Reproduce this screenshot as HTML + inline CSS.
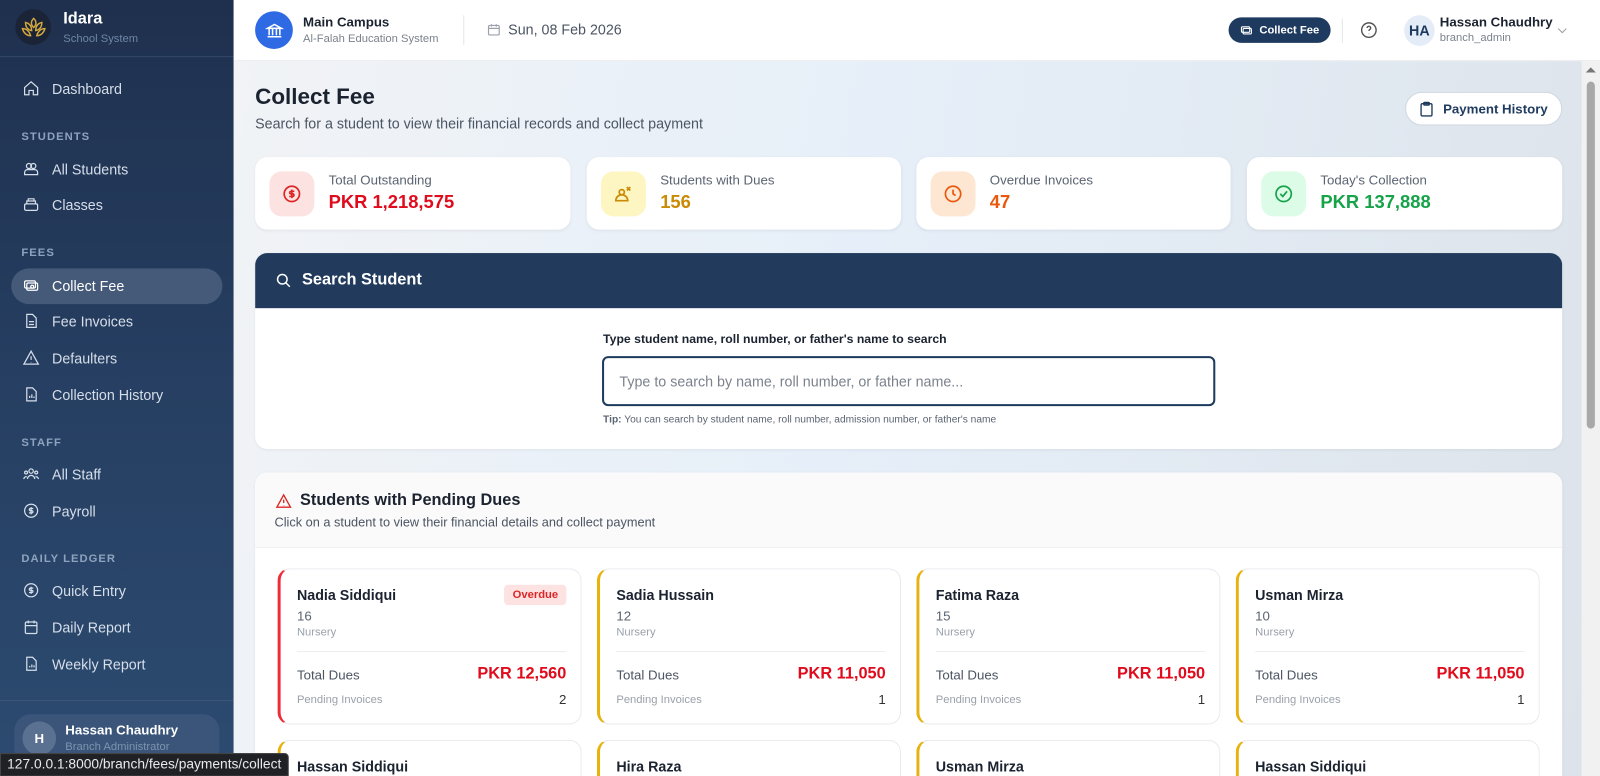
<!DOCTYPE html>
<html style="width:1600px;height:776px;overflow:hidden"><head><meta charset="utf-8"><style>
*{box-sizing:border-box;margin:0;padding:0}
body{width:1600px;height:776px;overflow:hidden;font-family:"Liberation Sans",sans-serif;position:relative;background:#eef2f6}
#w{position:absolute;left:0;top:0;width:1568px;height:761px;transform:scale(1.020408);transform-origin:0 0;overflow:hidden}
.a{position:absolute}
#sb{left:0;top:0;width:229px;height:761px;background:linear-gradient(180deg,#1f304e 0%,#263f62 50%,#2c4b70 100%)}
.nav{position:absolute;left:22px;color:#d6dee9;font-size:14px;display:flex;align-items:center;gap:12px}
.nav svg{width:17px;height:17px;stroke:#d6dee9;fill:none;stroke-width:1.7}
.sec{position:absolute;left:21px;font-size:11px;font-weight:bold;letter-spacing:1px;color:#8ea3bf}
#main{left:229px;top:60px;width:1321px;height:716px;background:linear-gradient(100deg,#f1f3f6 0%,#e6eff9 45%,#dde3ea 100%)}
.card{position:absolute;background:#fff;border-radius:12px;box-shadow:0 1px 3px rgba(0,0,0,.06)}
.stat .ic{position:absolute;left:14px;top:14px;width:44px;height:44px;border-radius:12px;display:flex;align-items:center;justify-content:center}
.stat .l{position:absolute;left:72px;top:15px;font-size:13px;color:#5b6472}
.stat .v{position:absolute;left:72px;top:34px;font-size:18px;font-weight:bold}
.sc{position:absolute;width:298px;height:153px;background:#fff;border:1px solid #e8eaee;border-radius:12px;border-left:3px solid #e9b10c}
.sc .n{position:absolute;left:16px;top:17px;font-size:14px;font-weight:bold;color:#1b2330}
.sc .r{position:absolute;left:16px;top:38px;font-size:13px;color:#5b6472}
.sc .c{position:absolute;left:16px;top:56px;font-size:11px;color:#9aa1ab}
.sc .hr{position:absolute;left:16px;right:14px;top:80px;border-top:1px solid #eceef1}
.sc .td{position:absolute;left:16px;top:96px;font-size:13px;color:#4b5563}
.sc .amt{position:absolute;right:14px;top:94px;font-size:16px;font-weight:bold;color:#e00b1c}
.sc .pi{position:absolute;left:16px;top:122px;font-size:11px;color:#9aa1ab}
.sc .pn{position:absolute;right:14px;top:120px;font-size:13px;color:#333}
.sc.b{height:51px;border-bottom:0;border-radius:12px 12px 0 0}
</style></head><body><div id="w">
<div id="sb" class="a">
 <div class="a" style="left:15px;top:9px;width:35px;height:35px;border-radius:50%;background:#1a2436;display:flex;align-items:center;justify-content:center">
  <svg width="26" height="22" viewBox="0 0 26 22" fill="none" stroke="#d6a940" stroke-width="1.4"><path d="M13 2c3 3 3 6 0 9c-3-3-3-6 0-9zM5 6c4 1 6 4 6 8c-4-1-6-4-6-8zM21 6c-4 1-6 4-6 8c4-1 6-4 6-8zM2 12c4 0 7 3 8 7c-4 0-7-3-8-7zM24 12c-4 0-7 3-8 7c4 0 7-3 8-7z"/></svg>
 </div>
 <div class="a" style="left:62px;top:10px;color:#fff;font-weight:bold;font-size:16px">Idara</div>
 <div class="a" style="left:62px;top:32px;color:#6f86a5;font-size:11px">School System</div>
 <div class="a" style="left:0;top:55px;width:229px;border-top:1px solid #34496a"></div>
 <div class="nav" style="top:78px"><svg viewBox="0 0 24 24"><path d="M3 11l9-8 9 8v10h-6v-6h-6v6H3z"/></svg>Dashboard</div>
 <div class="sec" style="top:128px">STUDENTS</div>
 <div class="nav" style="top:157px"><svg viewBox="0 0 24 24"><circle cx="9" cy="8" r="3.5"/><circle cx="15" cy="8" r="3.5"/><path d="M3 20v-3a4 4 0 014-4h10a4 4 0 014 4v3z"/></svg>All Students</div>
 <div class="nav" style="top:192px"><svg viewBox="0 0 24 24"><rect x="3" y="11" width="18" height="9" rx="2"/><path d="M6 11V7h12v4M8 7V4h8v3"/></svg>Classes</div>
 <div class="sec" style="top:242px">FEES</div>
 <div class="a" style="left:11px;top:263px;width:207px;height:35px;border-radius:18px;background:#455a78"></div>
 <div class="nav" style="top:271px;color:#fff"><svg viewBox="0 0 24 24" style="stroke:#fff"><rect x="3" y="6" width="15" height="10" rx="2"/><rect x="6" y="9" width="15" height="10" rx="2"/><circle cx="13.5" cy="14" r="2"/></svg>Collect Fee</div>
 <div class="nav" style="top:306px"><svg viewBox="0 0 24 24"><path d="M6 3h8l5 5v13H6z M9 13h7M9 17h7"/></svg>Fee Invoices</div>
 <div class="nav" style="top:342px"><svg viewBox="0 0 24 24"><path d="M12 3l10 18H2z M12 10v5M12 18v.5"/></svg>Defaulters</div>
 <div class="nav" style="top:378px"><svg viewBox="0 0 24 24"><path d="M6 3h8l5 5v13H6z M10 17v-3M13 17v-5M16 17v-2"/></svg>Collection History</div>
 <div class="sec" style="top:428px">STAFF</div>
 <div class="nav" style="top:456px"><svg viewBox="0 0 24 24"><circle cx="12" cy="8" r="3"/><circle cx="5" cy="10" r="2"/><circle cx="19" cy="10" r="2"/><path d="M7 19a5 5 0 0110 0M2 19a3 3 0 014-3M22 19a3 3 0 00-4-3"/></svg>All Staff</div>
 <div class="nav" style="top:492px"><svg viewBox="0 0 24 24"><circle cx="12" cy="12" r="9"/><path d="M15 9h-4a1.5 1.5 0 000 3h2a1.5 1.5 0 010 3H9M12 7v10"/></svg>Payroll</div>
 <div class="sec" style="top:542px">DAILY LEDGER</div>
 <div class="nav" style="top:570px"><svg viewBox="0 0 24 24"><circle cx="12" cy="12" r="9"/><path d="M15 9h-4a1.5 1.5 0 000 3h2a1.5 1.5 0 010 3H9M12 7v10"/></svg>Quick Entry</div>
 <div class="nav" style="top:606px"><svg viewBox="0 0 24 24"><rect x="4" y="5" width="16" height="16" rx="2"/><path d="M8 3v4M16 3v4M4 10h16"/></svg>Daily Report</div>
 <div class="nav" style="top:642px"><svg viewBox="0 0 24 24"><path d="M6 3h8l5 5v13H6z M10 17v-2M13 17v-4M16 17v-3"/></svg>Weekly Report</div>
 <div class="a" style="left:0;top:686px;width:229px;border-top:1px solid #3a5579"></div>
 <div class="a" style="left:14px;top:700px;width:201px;height:50px;border-radius:16px;background:#3a5579"></div>
 <div class="a" style="left:22px;top:707px;width:33px;height:33px;border-radius:50%;background:#5a7191;color:#fff;font-weight:bold;font-size:13px;display:flex;align-items:center;justify-content:center">H</div>
 <div class="a" style="left:64px;top:708px;color:#fff;font-weight:bold;font-size:13px">Hassan Chaudhry</div>
 <div class="a" style="left:64px;top:726px;color:#7d93b0;font-size:11px">Branch Administrator</div>
</div>
<div class="a" style="left:229px;top:0;width:1371px;height:60px;background:#fff;border-bottom:1px solid #e7eaee"></div>
<div class="a" style="left:250px;top:11px;width:37px;height:37px;border-radius:50%;background:#2d6ae3;display:flex;align-items:center;justify-content:center"><svg width="18" height="18" viewBox="0 0 24 24" fill="none" stroke="#fff" stroke-width="2"><path d="M3 9l9-5 9 5H3zM5 10v8M9.5 10v8M14.5 10v8M19 10v8M3 20h18"/></svg></div>
<div class="a" style="left:297px;top:14px;font-size:13px;font-weight:bold;color:#1b2330">Main Campus</div>
<div class="a" style="left:297px;top:32px;font-size:11px;color:#7b828c">Al-Falah Education System</div>
<div class="a" style="left:454px;top:15px;height:29px;border-left:1px solid #e3e6ea"></div>
<svg class="a" style="left:477px;top:22px" width="14" height="14" viewBox="0 0 24 24" fill="none" stroke="#9aa1ab" stroke-width="2"><rect x="3" y="5" width="18" height="16" rx="2"/><path d="M8 3v4M16 3v4M3 10h18"/></svg>
<div class="a" style="left:498px;top:21px;font-size:14px;color:#4b5563">Sun, 08 Feb 2026</div>
<div class="a" style="left:1204px;top:17px;width:100px;height:25px;border-radius:13px;background:#1e3a5f;color:#fff;font-size:11px;font-weight:bold;display:flex;align-items:center;justify-content:center;gap:6px"><svg width="13" height="13" viewBox="0 0 24 24" fill="none" stroke="#fff" stroke-width="2"><rect x="3" y="6" width="15" height="10" rx="2"/><rect x="6" y="9" width="15" height="10" rx="2"/></svg>Collect Fee</div>
<div class="a" style="left:1315px;top:18px;height:24px;border-left:1px solid #e3e6ea"></div>
<svg class="a" style="left:1333px;top:21px" width="17" height="17" viewBox="0 0 24 24" fill="none" stroke="#555" stroke-width="2"><circle cx="12" cy="12" r="10"/><path d="M9.5 9a2.5 2.5 0 115 .5c0 1.5-2.5 2-2.5 3.5M12 17v.5"/></svg>
<div class="a" style="left:1376px;top:15px;width:30px;height:30px;border-radius:50%;background:#e3ecf7;color:#1e3a5f;font-size:14px;font-weight:bold;display:flex;align-items:center;justify-content:center">HA</div>
<div class="a" style="left:1411px;top:14px;font-size:13px;font-weight:bold;color:#1b2330">Hassan Chaudhry</div>
<div class="a" style="left:1411px;top:31px;font-size:11px;color:#7b828c">branch_admin</div>
<svg class="a" style="left:1526px;top:27px" width="10" height="6" viewBox="0 0 10 6" fill="none" stroke="#999"><path d="M1 1l4 4 4-4"/></svg>
<div id="main" class="a"></div>
<div class="a" style="left:1550px;top:60px;width:18px;height:716px;background:#f1f1f1"></div>
<div class="a" style="left:1555px;top:80px;width:8px;height:340px;border-radius:4px;background:#a8a8a8"></div>
<div class="a" style="left:1554px;top:66px;width:0;height:0;border:5px solid transparent;border-bottom-color:#777;border-top:0"></div>
<div class="a" style="left:250px;top:82px;font-size:22px;font-weight:bold;color:#1b2330">Collect Fee</div>
<div class="a" style="left:250px;top:113px;font-size:14px;color:#4b5563">Search for a student to view their financial records and collect payment</div>
<div class="a" style="left:1377px;top:90px;width:154px;height:33px;border-radius:17px;background:#fff;border:1px solid #cfd7e2;font-size:13px;font-weight:bold;color:#1e3a5f;display:flex;align-items:center;justify-content:center;gap:9px"><svg width="14" height="16" viewBox="0 0 20 24" fill="none" stroke="#1e3a5f" stroke-width="2"><rect x="2" y="4" width="16" height="18" rx="2"/><rect x="6" y="2" width="8" height="4" rx="1"/></svg>Payment History</div>
<div class="card stat" style="left:250px;top:154px;width:309px;height:71px"><div class="ic" style="background:#fde2e2"><svg width="20" height="20" viewBox="0 0 24 24" fill="none" stroke="#dc2626" stroke-width="2"><circle cx="12" cy="12" r="9"/><path d="M15 9h-4a1.5 1.5 0 000 3h2a1.5 1.5 0 010 3H9M12 7v10"/></svg></div><div class="l">Total Outstanding</div><div class="v" style="color:#e00b1c">PKR 1,218,575</div></div>
<div class="card stat" style="left:575px;top:154px;width:308px;height:71px"><div class="ic" style="background:#fdf6c3"><svg width="20" height="20" viewBox="0 0 24 24" fill="none" stroke="#ca8a04" stroke-width="2"><circle cx="10" cy="10" r="3"/><path d="M3 20a7 7 0 0114 0zM16 4l4 4M20 4l-4 4"/></svg></div><div class="l">Students with Dues</div><div class="v" style="color:#ca8a04">156</div></div>
<div class="card stat" style="left:898px;top:154px;width:308px;height:71px"><div class="ic" style="background:#fde7d3"><svg width="20" height="20" viewBox="0 0 24 24" fill="none" stroke="#ea580c" stroke-width="2"><circle cx="12" cy="12" r="9"/><path d="M12 7v5l3 2"/></svg></div><div class="l">Overdue Invoices</div><div class="v" style="color:#ea580c">47</div></div>
<div class="card stat" style="left:1222px;top:154px;width:309px;height:71px"><div class="ic" style="background:#dcfce7"><svg width="20" height="20" viewBox="0 0 24 24" fill="none" stroke="#16a34a" stroke-width="2"><circle cx="12" cy="12" r="9"/><path d="M8 12l3 3 5-6"/></svg></div><div class="l">Today's Collection</div><div class="v" style="color:#16a34a">PKR 137,888</div></div>
<div class="card" style="left:250px;top:248px;width:1281px;height:192px;overflow:hidden">
 <div style="height:54px;background:#223b5d;display:flex;align-items:center;padding-left:20px;gap:10px;color:#fff;font-weight:bold;font-size:16px"><svg width="16" height="16" viewBox="0 0 24 24" fill="none" stroke="#fff" stroke-width="2.2"><circle cx="10" cy="10" r="7"/><path d="M15 15l6 6"/></svg>Search Student</div>
 <div class="a" style="left:341px;top:77px;font-size:12px;font-weight:bold;color:#1b2330">Type student name, roll number, or father's name to search</div>
 <div class="a" style="left:340px;top:101px;width:601px;height:49px;border:2px solid #1e3a5f;border-radius:6px;font-size:14px;color:#7b828c;padding:15px 0 0 15px">Type to search by name, roll number, or father name...</div>
 <div class="a" style="left:341px;top:158px;font-size:10px;color:#5b6472"><b>Tip:</b> You can search by student name, roll number, admission number, or father's name</div>
</div>
<div class="card" style="left:250px;top:463px;width:1281px;height:313px;overflow:hidden;border-radius:12px 12px 0 0">
 <div style="height:74px;background:#fafafa;border-bottom:1px solid #eef0f2"></div>
 <svg class="a" style="left:20px;top:20px" width="16" height="16" viewBox="0 0 24 24" fill="none" stroke="#dc2626" stroke-width="2"><path d="M12 3l10 18H2z M12 10v5M12 18v.5"/></svg>
 <div class="a" style="left:44px;top:19px;font-size:16px;font-weight:bold;color:#1b2330">Students with Pending Dues</div>
 <div class="a" style="left:19px;top:42px;font-size:12.5px;color:#4b5563">Click on a student to view their financial details and collect payment</div>
</div>
<div class="sc" style="left:272px;top:557px;border-left-color:#ef2b36"><div class="n">Nadia Siddiqui</div><div class="a" style="right:14px;top:15px;background:#fde2e2;color:#dc2626;font-size:11px;font-weight:bold;padding:4px 8px;border-radius:4px">Overdue</div><div class="r">16</div><div class="c">Nursery</div><div class="hr"></div><div class="td">Total Dues</div><div class="amt">PKR 12,560</div><div class="pi">Pending Invoices</div><div class="pn">2</div></div>
<div class="sc" style="left:585px;top:557px"><div class="n">Sadia Hussain</div><div class="r">12</div><div class="c">Nursery</div><div class="hr"></div><div class="td">Total Dues</div><div class="amt">PKR 11,050</div><div class="pi">Pending Invoices</div><div class="pn">1</div></div>
<div class="sc" style="left:898px;top:557px"><div class="n">Fatima Raza</div><div class="r">15</div><div class="c">Nursery</div><div class="hr"></div><div class="td">Total Dues</div><div class="amt">PKR 11,050</div><div class="pi">Pending Invoices</div><div class="pn">1</div></div>
<div class="sc" style="left:1211px;top:557px"><div class="n">Usman Mirza</div><div class="r">10</div><div class="c">Nursery</div><div class="hr"></div><div class="td">Total Dues</div><div class="amt">PKR 11,050</div><div class="pi">Pending Invoices</div><div class="pn">1</div></div>
<div class="sc b" style="left:272px;top:725px"><div class="n">Hassan Siddiqui</div></div>
<div class="sc b" style="left:585px;top:725px"><div class="n">Hira Raza</div></div>
<div class="sc b" style="left:898px;top:725px"><div class="n">Usman Mirza</div></div>
<div class="sc b" style="left:1211px;top:725px"><div class="n">Hassan Siddiqui</div></div>
<div class="a" style="left:0;top:738px;height:23px;padding:2px 6px;background:#202124;color:#e8eaed;font-size:13.5px;border:1px solid #444;border-radius:0 4px 0 0;white-space:nowrap">127.0.0.1:8000/branch/fees/payments/collect</div>
</div></body></html>
